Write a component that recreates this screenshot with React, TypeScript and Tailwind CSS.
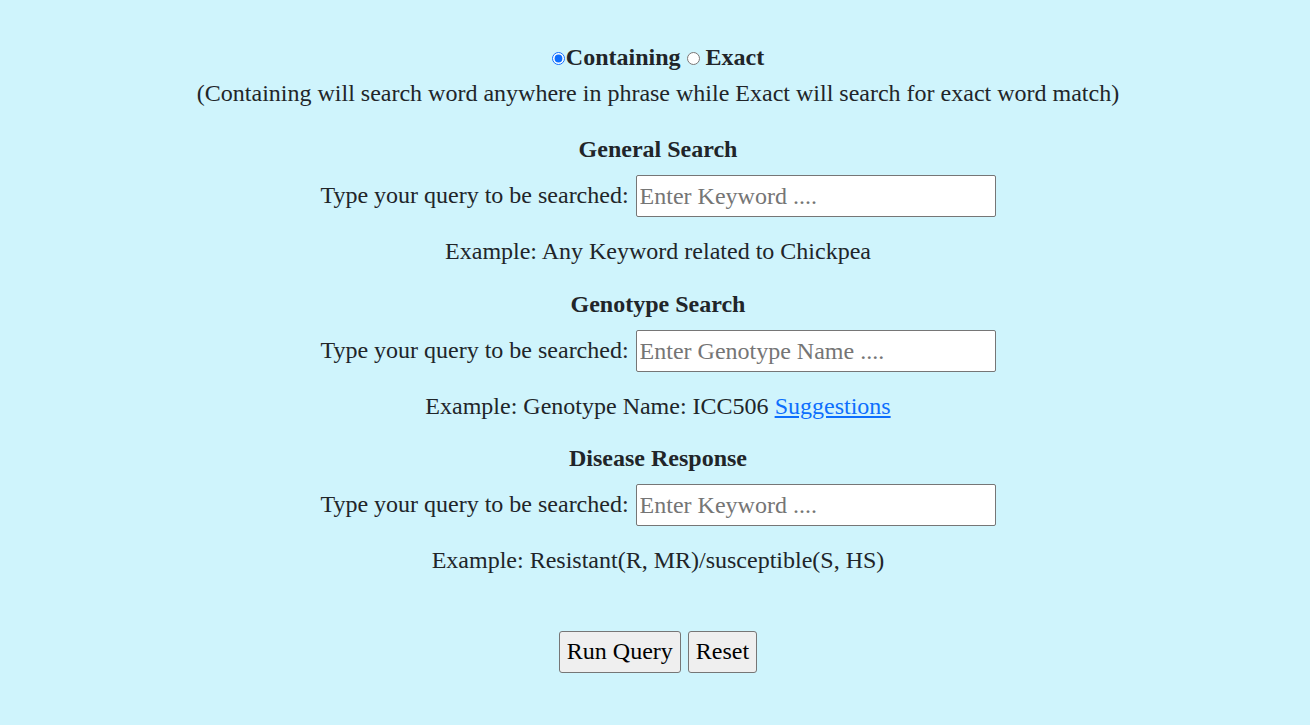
import React from "react";

const serif = { fontFamily: '"Liberation Serif", "Times New Roman", serif' };

function Section({ title, placeholder, example }: { title: string; placeholder: string; example: React.ReactNode }) {
  return (
    <>
      <div className="h-[36px] flex items-center justify-center font-bold">{title}</div>
      <div className="mt-[7px] h-[42px] flex items-center justify-center">
        <span>Type your query to be searched:</span>
        <input
          type="text"
          placeholder={placeholder}
          className="ml-[7px] w-[360px] h-[42px] bg-white border border-[#767676] rounded-[2px] px-[3px] text-[24px] text-[#212529] placeholder:text-[#757575] outline-none"
          style={serif}
        />
      </div>
      <div className="mt-[17px] h-[36px] flex items-center justify-center">{example}</div>
    </>
  );
}

export default function App() {
  return (
    <div className="min-h-[725px] w-full bg-[#cff4fc] text-[#212529] text-[24px] leading-[1.15]" style={serif}>
      <div className="pt-[40px] pl-[6px] flex flex-col">
        <div className="h-[36px] flex items-center justify-center font-bold">
          <input type="radio" name="m" defaultChecked className="w-[13px] h-[13px] m-0 mr-[1px] accent-[#0d6efd]" />
          <span>Containing</span>
          <input type="radio" name="m" className="w-[13px] h-[13px] m-0 ml-[6px] mr-[6px]" />
          <span>Exact</span>
        </div>
        <div className="h-[36px] flex items-center justify-center">
          (Containing will search word anywhere in phrase while Exact will search for exact word match)
        </div>
        <div className="mt-[20px]">
          <Section title="General Search" placeholder="Enter Keyword ...." example="Example: Any Keyword related to Chickpea" />
        </div>
        <div className="mt-[17px]">
          <Section
            title="Genotype Search"
            placeholder="Enter Genotype Name ...."
            example={
              <span>
                Example: Genotype Name: ICC506{" "}
                <a href="#" className="text-[#0d6efd] underline">Suggestions</a>
              </span>
            }
          />
        </div>
        <div className="mt-[16px]">
          <Section title="Disease Response" placeholder="Enter Keyword ...." example="Example: Resistant(R, MR)/susceptible(S, HS)" />
        </div>
        <div className="mt-[52px] flex justify-center gap-[7px]">
          <button className="h-[42px] px-[7px] bg-[#efefef] border border-[#767676] rounded-[3px] text-[24px] text-black" style={serif}>
            Run Query
          </button>
          <button className="h-[42px] px-[7px] bg-[#efefef] border border-[#767676] rounded-[3px] text-[24px] text-black" style={serif}>
            Reset
          </button>
        </div>
      </div>
    </div>
  );
}
